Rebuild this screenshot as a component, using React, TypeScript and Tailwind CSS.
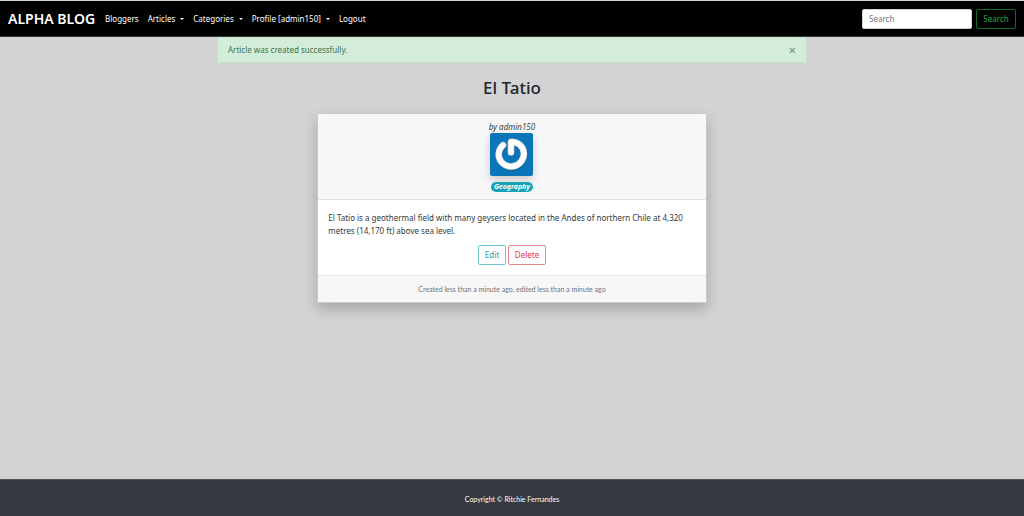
import { useState } from "react";

const navLinks = [
  { label: "Bloggers", menu: false },
  { label: "Articles", menu: true },
  { label: "Categories", menu: true },
  { label: "Profile [admin150]", menu: true },
  { label: "Logout", menu: false },
];

function Caret() {
  return (
    <span className="ml-[5px] inline-block border-x-2 border-t-2 border-x-transparent border-t-white align-middle" />
  );
}

function Navbar() {
  return (
    <nav className="flex h-9 items-center border-b border-[#343a40] bg-black px-2 text-white">
      <a href="#" className="mr-2.5 text-[14px] font-semibold leading-5 whitespace-nowrap">
        ALPHA BLOG
      </a>
      <ul className="flex flex-1 gap-[9px] text-[8px] leading-3 whitespace-nowrap">
        {navLinks.map((link) => (
          <li key={link.label}>
            <a href="#">
              {link.label}
              {link.menu && <Caret />}
            </a>
          </li>
        ))}
      </ul>
      <form className="flex gap-1 text-[8px]" onSubmit={(e) => e.preventDefault()}>
        <input
          type="search"
          aria-label="Search"
          placeholder="Search"
          className="h-5 w-[110px] rounded-xs border border-[#ced4da] bg-white px-1.5 text-[#495057] placeholder:text-[#6c757d]"
        />
        <button
          type="submit"
          className="h-5 w-10 rounded-xs border border-[#146c2a] text-[#28a745]"
        >
          Search
        </button>
      </form>
    </nav>
  );
}

const powerPath =
  "M13 12.2 C8 16.4 7.3 24 11.4 29 C16.2 34.8 25.4 35 30.4 29.6 C35.3 24.2 35 16.4 29.9 11.9 C27.4 9.7 24.6 8.9 21 8.9 V19.4";

function Avatar() {
  return (
    <svg
      viewBox="0 0 43 43"
      role="img"
      aria-label="admin150"
      className="mx-auto size-[43px] rounded-xs shadow-[0_4px_9px_rgba(0,0,0,0.18)]"
    >
      <rect width="43" height="43" fill="#0a75b9" />
      <g fill="none" strokeLinecap="round" strokeLinejoin="round">
        <path d={powerPath} stroke="#0a4f82" strokeOpacity="0.45" strokeWidth="6.6" transform="translate(0.6 0.9)" />
        <path d={powerPath} stroke="#d9dcdf" strokeWidth="6.6" />
        <path d={powerPath} stroke="#ffffff" strokeWidth="5" />
      </g>
    </svg>
  );
}

function ArticleCard() {
  return (
    <article className="mx-auto w-[66%] rounded-xs border border-[#c9c9c9] bg-white shadow-[0_6px_14px_rgba(0,0,0,0.22)]">
      <header className="border-b border-[#dfdfdf] bg-[#f7f7f7] px-3 py-[7px] text-center italic">
        <p className="text-[8px] leading-3 text-[#343a40]">by admin150</p>
        <Avatar />
        <a
          href="#"
          className="mx-auto mt-1.5 block w-fit rounded-full bg-[#17a2b8] px-[3px] text-[7px] leading-[10px] font-bold text-white"
        >
          Geography
        </a>
      </header>
      <div className="px-2.5 pt-[11px] pb-2.5">
        <p className="text-[8px] leading-[13px] text-[#343a40]">
          El Tatio is a geothermal field with many geysers located in the Andes of northern Chile at
          4,320 metres (14,170 ft) above sea level.
        </p>
        <div className="mt-2 flex justify-center gap-0.5 text-[8px]">
          <button type="button" className="h-5 w-7 rounded-xs border border-[#6fc6d3] text-[#17a2b8]">
            Edit
          </button>
          <button type="button" className="h-5 w-[38px] rounded-xs border border-[#e8848e] text-[#dc3545]">
            Delete
          </button>
        </div>
      </div>
      <footer className="border-t border-[#e6e6e6] bg-[#f7f7f7] py-[7px] text-center font-['Lato','Noto_Sans',sans-serif] text-[7px] leading-3 text-[#6c757d]">
        Created less than a minute ago, edited less than a minute ago
      </footer>
    </article>
  );
}

export default function App() {
  const [alertOpen, setAlertOpen] = useState(true);
  return (
    <div className="flex min-h-screen flex-col bg-[#d3d3d3] pt-px font-['Noto_Sans','Open_Sans',sans-serif] text-[#212529]">
      <Navbar />
      <main className="mx-auto w-full max-w-[590px] flex-1">
        {alertOpen && (
          <div
            role="alert"
            className="flex items-center justify-between rounded-xs border border-[#c3e6cb] bg-[#d4edda] px-2.5 py-1.5 text-[8px] leading-3 text-[#3c7449]"
          >
            Article was created successfully.
            <button
              type="button"
              aria-label="Close"
              onClick={() => setAlertOpen(false)}
              className="text-[13px] leading-3 font-bold text-[#7da587]"
            >
              ×
            </button>
          </div>
        )}
        <h1 className="my-3.5 text-center text-[17px] leading-[22px] font-medium">El Tatio</h1>
        <ArticleCard />
      </main>
      <footer className="border-t border-[#50555a] bg-[#343a40] pt-[13px] pb-[11px] text-center font-['Lato','Noto_Sans',sans-serif] text-[7px] leading-3 text-white">
        Copyright © Ritchie Fernandes
      </footer>
    </div>
  );
}
